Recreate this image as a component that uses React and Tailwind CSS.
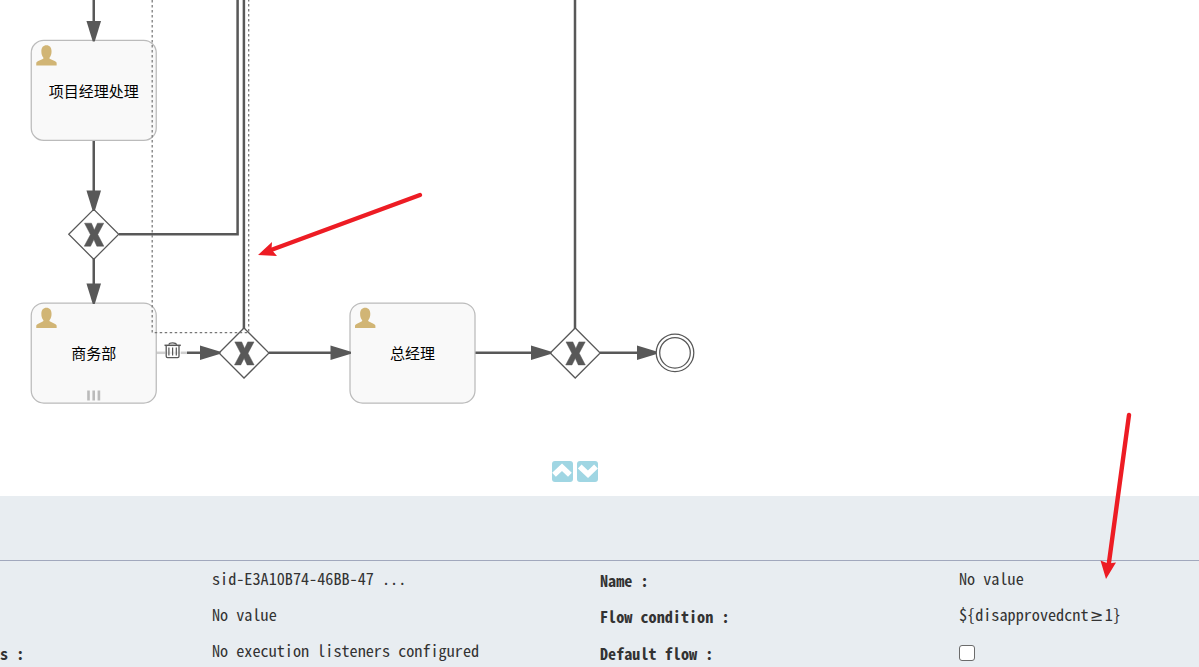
import React from "react";

const INK = "#585858";

function Person({ x, y }) {
  return (
    <path
      transform={`translate(${x} ${y})`}
      fill="#d1b575"
      d="M0 20.500V18.600C0 17.300.800 16.800 2 16.200L6.500 14C7.200 13.600 7.500 13.200 7 12.500C5.700 10.900 5.100 9 5.100 6.300C5.100 2.500 7 .300 10.200.300S15.300 2.500 15.300 6.300C15.300 9 14.700 10.900 13.400 12.500C12.900 13.200 13.200 13.600 13.900 14L18.400 16.200C19.600 16.800 20.400 17.300 20.400 18.600V20.500Z"
    />
  );
}

function Task({ x, y, children }) {
  return (
    <g>
      <rect x={x} y={y} width="125" height="100" rx="12.5" fill="#f9f9f9" stroke="#bbbbbb" strokeWidth="1.25" />
      <Person x={x + 5} y={y + 4.5} />
      {children}
    </g>
  );
}

function Gateway({ x, y }) {
  return (
    <g transform={`translate(${x} ${y})`}>
      <path d="M-25 0L0-25L25 0L0 25Z" fill="#fff" stroke={INK} strokeWidth="1.25" />
      <path
        d="M-9.500-11.500H-2.600L.300-4.800L3.400-11.500H9.700L3.700-.200L9.800 11.500H2.800L-.200 4.900L-3.500 11.500H-9.800L-3.600-.100Z"
        fill={INK}
        stroke={INK}
        strokeWidth=".5"
        transform="translate(.3 .4)"
      />
    </g>
  );
}

function Head({ x, y, down }) {
  return <path transform={`translate(${x} ${y})${down ? " rotate(90)" : ""}`} d="M0-1V1L-20.500 7.300V-7.300Z" fill={INK} />;
}

function Diagram() {
  return (
    <svg width="1199" height="496" viewBox="0 0 1199 496" className="block">
      <g fill="none" stroke={INK} strokeWidth="2.5">
        <path d="M93.750 0V38M93.750 140V208M93.750 259V300" />
        <path d="M119 234.200H237.600V0" />
        <path d="M243.900 0V329M575 0V329" />
        <path d="M187 352.800H218M269 352.800H348M475 352.800H548M600 352.800H655" />
        <path d="M156 352.800H187" stroke="#cfcfcf" />
      </g>
      <Task x={31.25} y={40.4} />
      <Task x={31.25} y={303}>
        <path d="M88.500 390.500v10M93.700 390.500v10M98.900 390.500v10" stroke="#bbb" strokeWidth="2.6" />
      </Task>
      <Task x={350} y={303} />
      <Gateway x={93.75} y={234.3} />
      <Gateway x={244} y={353} />
      <Gateway x={575.2} y={353} />
      <Head x={93.75} y={41.5} down />
      <Head x={93.75} y={211} down />
      <Head x={93.75} y={304} down />
      <Head x={220.5} y={352.8} />
      <Head x={351} y={352.8} />
      <Head x={551.5} y={352.8} />
      <Head x={657.5} y={352.8} />
      <circle cx="675" cy="352.8" r="18.8" fill="#fff" stroke={INK} strokeWidth="1.25" />
      <circle cx="675" cy="352.8" r="15.3" fill="#fff" stroke={INK} strokeWidth="1.25" />
      <path d="M152.200 0V332.500H248.700V0" fill="none" stroke="#777" strokeWidth="1.25" strokeDasharray="2.5 2.5" />
      <rect x="165" y="342" width="16" height="16" fill="#fff" fillOpacity=".7" />
      <g fill="none" stroke={INK}>
        <path d="M164.500 345.300H180.800" strokeWidth="1.5" />
        <path d="M168.800 344.700C169.200 343 170.500 342.800 172.700 342.800S176 343 176.700 344.700" strokeWidth="1.2" />
        <path d="M166.200 346V356.300Q166.200 357.700 167.600 357.700H177.600Q179 357.700 179 356.300V346" strokeWidth="1.3" />
        <path d="M168.900 347.500V355.500M172.600 347.500V355.500M176.300 347.500V355.500" strokeWidth="1.2" />
      </g>
      <g fontFamily="'Noto Sans CJK SC', sans-serif" fontSize="15" textAnchor="middle" fill="#000">
        <text x="93.750" y="96.5">项目经理处理</text>
        <text x="93.750" y="358.5">商务部</text>
        <text x="412.500" y="358.5">总经理</text>
      </g>
    </svg>
  );
}

function Toggle({ down }) {
  return (
    <button className="size-[21px] rounded-[3px] bg-[#a0d6e3]">
      <svg viewBox="0 0 21 21" className="block">
        <path
          d={down ? "M2.700 5.500L11 13.300L19 5.500" : "M2 13.800L10 6.200L17.900 13.800"}
          fill="none"
          stroke="#fff"
          strokeWidth="5.400"
        />
      </svg>
    </button>
  );
}

function Mono({ bold, children }) {
  return (
    <span
      className={
        "block h-9 whitespace-pre font-['Noto_Sans_Mono_CJK_SC','Noto_Sans_CJK_SC',monospace] text-[16.2px] leading-[34px] text-[#333] " +
        (bold ? "font-bold" : "font-normal")
      }
    >
      {children}
    </span>
  );
}

export default function App() {
  return (
    <div className="relative flex h-[667px] w-[1199px] flex-col overflow-hidden bg-white">
      <main className="relative h-[496px] shrink-0">
        <Diagram />
        <div className="absolute left-[552px] top-[461px] flex gap-1">
          <Toggle />
          <Toggle down />
        </div>
      </main>
      <section className="flex-1 bg-[#e8edf1]">
        <div className="h-[65px] border-b border-[#a1a8bd]" />
        <div className="grid grid-cols-[212px_388px_359px_240px]">
          <div className="pt-[75px]"><Mono bold>s :</Mono></div>
          <div>
            <Mono>sid-E3A10B74-46BB-47 ...</Mono>
            <Mono>No value</Mono>
            <Mono>No execution listeners configured</Mono>
          </div>
          <div className="pt-[2px]">
            <Mono bold>Name :</Mono>
            <Mono bold>Flow condition :</Mono>
            <div className="pt-px"><Mono bold>Default flow :</Mono></div>
          </div>
          <div>
            <Mono>No value</Mono>
            <Mono>
              {"${disapprovedcnt"}
              <span className="inline-block w-[16.2px] text-center font-['DejaVu_Sans'] leading-none">≥</span>
              {"1}"}
            </Mono>
            <div className="mt-3 size-4 rounded-[3px] border border-[#6b6b6b] bg-white" />
          </div>
        </div>
      </section>
      <svg width="1199" height="667" className="pointer-events-none absolute inset-0">
        <g stroke="#ed1c24" strokeWidth="4.4" strokeLinecap="round" fill="#ed1c24">
          <path d="M420 195L271 250" />
          <path d="M1129 415L1108.500 566" />
          <path d="M258 255L272 242L271.500 249.500L277 256Z" stroke="none" />
          <path d="M1106 579L1100.500 560.500L1108 563.500L1116 562.500Z" stroke="none" />
        </g>
      </svg>
    </div>
  );
}
